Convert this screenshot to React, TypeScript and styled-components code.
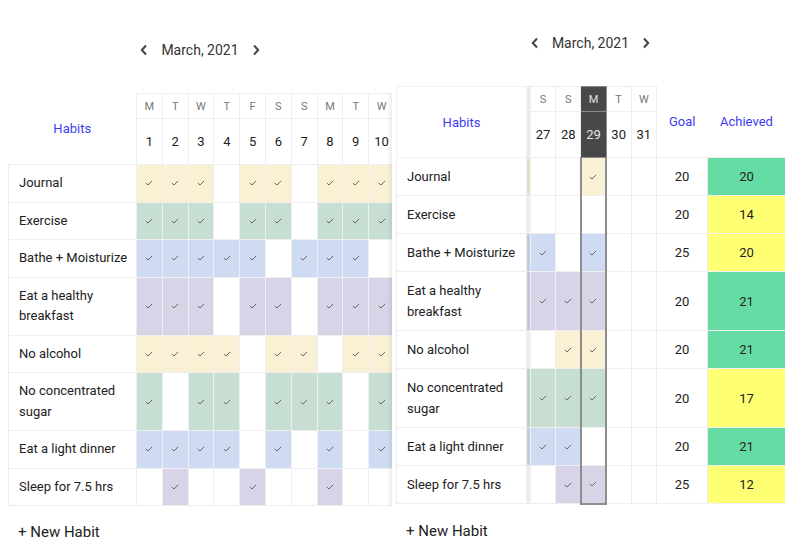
import styled, { createGlobalStyle } from 'styled-components'

type Tone = 'yellow' | 'green' | 'blue' | 'purple'

interface Habit {
    name: string
    tone: Tone
    goal: number
    achieved: number
    first: string
    last: string
}

const tones: Record<Tone, string> = {
    yellow: '#faf1d5',
    green: '#c7dfd2',
    blue: '#cfdbf2',
    purple: '#d8d3e6',
}

const habits: Habit[] = [
    { name: 'Journal', tone: 'yellow', goal: 20, achieved: 20, first: '1110110111', last: '100100' },
    { name: 'Exercise', tone: 'green', goal: 20, achieved: 14, first: '1110110111', last: '000000' },
    { name: 'Bathe + Moisturize', tone: 'blue', goal: 25, achieved: 20, first: '1111101110', last: '110100' },
    { name: 'Eat a healthy breakfast', tone: 'purple', goal: 20, achieved: 21, first: '1110110111', last: '111100' },
    { name: 'No alcohol', tone: 'yellow', goal: 20, achieved: 21, first: '1111011011', last: '001100' },
    { name: 'No concentrated sugar', tone: 'green', goal: 20, achieved: 17, first: '1011011101', last: '111100' },
    { name: 'Eat a light dinner', tone: 'blue', goal: 20, achieved: 21, first: '1111010101', last: '111000' },
    { name: 'Sleep for 7.5 hrs', tone: 'purple', goal: 25, achieved: 12, first: '0100100100', last: '001100' },
]

const firstDays = [
    ['M', 1], ['T', 2], ['W', 3], ['T', 4], ['F', 5],
    ['S', 6], ['S', 7], ['M', 8], ['T', 9], ['W', 10],
] as const

const lastDays = [['S', 27], ['S', 28], ['M', 29], ['T', 30], ['W', 31]] as const
const TODAY = 29

const GlobalStyle = createGlobalStyle`
    body {
        margin: 0;
        background: #ffffff;
        font-family: Roboto, 'Noto Sans', sans-serif;
        color: #222222;
    }
`

const Page = styled.div`
    display: flex;
    gap: 4px;
    padding-left: 8px;
    width: 794px;
    height: 558px;
    box-sizing: border-box;
    overflow: hidden;
`

const Panel = styled.section<{ $top: number; $width: number }>`
    width: ${p => p.$width}px;
    padding-top: ${p => p.$top}px;
    display: flex;
    flex-direction: column;
`

const MonthNav = styled.div`
    display: flex;
    align-items: center;
    justify-content: center;
    gap: 11px;
    height: 20px;
    font-size: 14px;
    color: #333333;
`

const ArrowButton = styled.button`
    display: flex;
    align-items: center;
    justify-content: center;
    width: 12px;
    height: 16px;
    padding: 0;
    border: none;
    background: none;
    cursor: pointer;
    svg {
        fill: none;
        stroke: #444444;
        stroke-width: 2;
    }
`

const TableWrap = styled.div<{ $fade?: boolean }>`
    position: relative;
    margin-top: 33px;
    overflow: hidden;
    &::after {
        content: '';
        display: ${p => (p.$fade ? 'block' : 'none')};
        position: absolute;
        top: 0;
        right: 0;
        bottom: 0;
        width: 5px;
        background: linear-gradient(to right, rgba(0, 0, 0, 0), rgba(0, 0, 0, 0.07));
    }
`

const Table = styled.table<{ $width: number; $line: number }>`
    width: ${p => p.$width}px;
    border-collapse: collapse;
    table-layout: fixed;
    font-size: 13px;
    th, td {
        padding: 0;
        text-align: center;
        font-weight: 400;
    }
    tbody td {
        line-height: ${p => p.$line}px;
    }
`

const LabelHead = styled.th<{ $boxed?: boolean }>`
    color: #3c3cf2;
    font-size: 13px;
    border: ${p => (p.$boxed ? '1px solid #f2f2f2' : 'none')};
`

const WeekdayCell = styled.th<{ $active?: boolean }>`
    height: 24px;
    font-size: 11px;
    color: ${p => (p.$active ? '#e0e0e0' : '#777777')};
    background: ${p => (p.$active ? '#484848' : 'transparent')};
    border: 1px solid ${p => (p.$active ? '#8a8a8a' : '#eeeeee')};
`

const DateCell = styled.th<{ $active?: boolean }>`
    height: 45px;
    font-size: 13px;
    color: ${p => (p.$active ? '#e6e6e6' : '#222222')};
    background: ${p => (p.$active ? '#484848' : 'transparent')};
    border: 1px solid ${p => (p.$active ? '#8a8a8a' : '#eeeeee')};
`

const PeekHead = styled.th`
    border-top: 1px solid #eeeeee;
    background: linear-gradient(to right, rgba(0, 0, 0, 0.13), rgba(0, 0, 0, 0.02));
`

const NameCell = styled.td`
    padding: 8px 2px 8px 10px !important;
    text-align: left !important;
    color: #222222;
    border: 1px solid #eeeeee;
`

const DayCell = styled.td<{ $color?: string; $active?: boolean; $last?: boolean }>`
    background: ${p => p.$color || '#ffffff'};
    border: 1px solid #efefef;
    ${p => p.$active && `
        border-left: 2px solid #8d8d8d;
        border-right: 2px solid #8d8d8d;
    `}
    ${p => p.$active && p.$last && 'border-bottom: 2px solid #8d8d8d;'}
`

const PeekCell = styled.td<{ $color?: string }>`
    background-color: ${p => p.$color || '#ffffff'};
    background-image: linear-gradient(to right, rgba(0, 0, 0, 0.12), rgba(0, 0, 0, 0.01));
    border-bottom: 1px solid #eeeeee;
`

const GoalCell = styled.td`
    font-size: 13px;
    color: #222222;
    border: 1px solid #eeeeee;
`

const AchievedCell = styled.td<{ $met: boolean }>`
    font-size: 13px;
    color: #222222;
    background: ${p => (p.$met ? '#66dca5' : '#ffff74')};
    border: 1px solid #f3f3f3;
`

const CheckIcon = styled.svg`
    display: block;
    margin: 0 auto;
    fill: none;
    stroke: #6a6a6a;
    stroke-width: 1;
`

const NewHabit = styled.button<{ $gap: number }>`
    align-self: flex-start;
    margin-top: ${p => p.$gap}px;
    padding: 0 0 0 10px;
    border: none;
    background: none;
    font-family: Roboto, 'Noto Sans', sans-serif;
    font-size: 15px;
    line-height: 18px;
    color: #222222;
    cursor: pointer;
`

const Check = () => (
    <CheckIcon viewBox="0 0 8 6" width="8" height="6">
        <polyline points="0.8,3 3,5 7.2,0.8" />
    </CheckIcon>
)

const Nav = () => (
    <MonthNav>
        <ArrowButton aria-label="previous month">
            <svg width="8" height="12" viewBox="0 0 8 12"><polyline points="6,1.5 1.8,6 6,10.5" /></svg>
        </ArrowButton>
        <span>March, 2021</span>
        <ArrowButton aria-label="next month">
            <svg width="8" height="12" viewBox="0 0 8 12"><polyline points="2,1.5 6.2,6 2,10.5" /></svg>
        </ArrowButton>
    </MonthNav>
)

const FirstWeek = () => (
    <TableWrap $fade>
        <Table $width={386} $line={20.5}>
            <colgroup>
                <col style={{ width: 128 }} />
                {firstDays.map((_, i) => <col key={i} style={{ width: 25.8 }} />)}
            </colgroup>
            <thead>
                <tr>
                    <LabelHead rowSpan={2}>Habits</LabelHead>
                    {firstDays.map(([d], i) => <WeekdayCell key={i}>{d}</WeekdayCell>)}
                </tr>
                <tr>
                    {firstDays.map(([, n]) => <DateCell key={n}>{n}</DateCell>)}
                </tr>
            </thead>
            <tbody>
                {habits.map(habit => (
                    <tr key={habit.name}>
                        <NameCell>{habit.name}</NameCell>
                        {habit.first.split('').map((done, i) => (
                            <DayCell key={i} $color={done === '1' ? tones[habit.tone] : undefined}>
                                {done === '1' && <Check />}
                            </DayCell>
                        ))}
                    </tr>
                ))}
            </tbody>
        </Table>
    </TableWrap>
)

const LastWeek = () => (
    <TableWrap>
        <Table $width={389} $line={21}>
            <colgroup>
                <col style={{ width: 130 }} />
                <col style={{ width: 4 }} />
                {lastDays.map((_, i) => <col key={i} style={{ width: 25.2 }} />)}
                <col style={{ width: 51 }} />
                <col style={{ width: 78 }} />
            </colgroup>
            <thead>
                <tr>
                    <LabelHead rowSpan={2} $boxed>Habits</LabelHead>
                    <PeekHead rowSpan={2} />
                    {lastDays.map(([d, n]) => <WeekdayCell key={n} $active={n === TODAY}>{d}</WeekdayCell>)}
                    <LabelHead rowSpan={2}>Goal</LabelHead>
                    <LabelHead rowSpan={2}>Achieved</LabelHead>
                </tr>
                <tr>
                    {lastDays.map(([, n]) => <DateCell key={n} $active={n === TODAY}>{n}</DateCell>)}
                </tr>
            </thead>
            <tbody>
                {habits.map((habit, row) => {
                    const marks = habit.last.split('')
                    return (
                        <tr key={habit.name}>
                            <NameCell>{habit.name}</NameCell>
                            <PeekCell $color={marks[0] === '1' ? tones[habit.tone] : undefined} />
                            {lastDays.map(([, n], i) => {
                                const done = marks[i + 1] === '1'
                                return (
                                    <DayCell
                                        key={n}
                                        $color={done ? tones[habit.tone] : undefined}
                                        $active={n === TODAY}
                                        $last={row === habits.length - 1}
                                    >
                                        {done && <Check />}
                                    </DayCell>
                                )
                            })}
                            <GoalCell>{habit.goal}</GoalCell>
                            <AchievedCell $met={habit.achieved >= habit.goal}>{habit.achieved}</AchievedCell>
                        </tr>
                    )
                })}
            </tbody>
        </Table>
    </TableWrap>
)

export default function App() {
    return (
        <>
            <GlobalStyle />
            <Page>
                <Panel $top={40} $width={384}>
                    <Nav />
                    <FirstWeek />
                    <NewHabit $gap={17}>+ New Habit</NewHabit>
                </Panel>
                <Panel $top={33} $width={389}>
                    <Nav />
                    <LastWeek />
                    <NewHabit $gap={17}>+ New Habit</NewHabit>
                </Panel>
            </Page>
        </>
    )
}
